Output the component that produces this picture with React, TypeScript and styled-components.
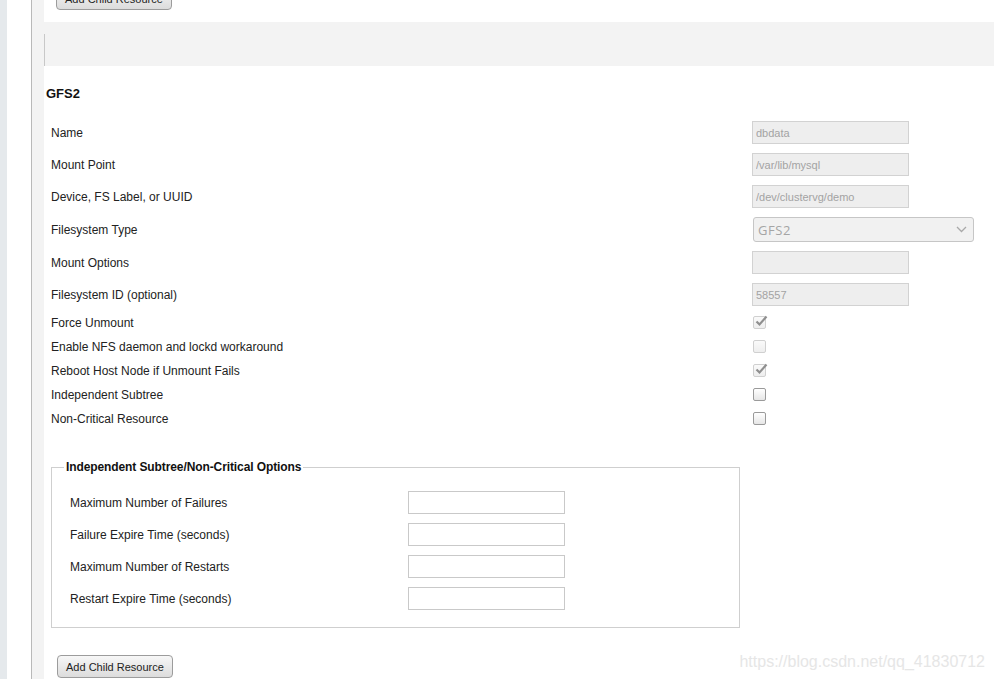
import React from "react";
import styled, { createGlobalStyle } from "styled-components";

const Global = createGlobalStyle`
  html, body { margin: 0; padding: 0; background: #fff; }
  body { font-family: "Liberation Sans", Arial, sans-serif; color: #222; overflow: hidden; }
`;

const Page = styled.div`
  display: flex;
  height: 679px;
  overflow: hidden;
  position: relative;
`;

const LeftStrip = styled.div`
  width: 7px;
  background: #e5e9ec;
  flex: none;
`;

const Gutter = styled.div`
  width: 24px;
  background: #fff;
  border-right: 1px solid #b9b9b9;
  flex: none;
`;

const GrayColumn = styled.div`
  width: 12px;
  background: #f3f3f3;
  flex: none;
`;

const Content = styled.div`
  flex: 1;
  display: flex;
  flex-direction: column;
  background: #fff;
`;

const TopArea = styled.div`
  height: 22px;
  display: flex;
  align-items: flex-end;
  padding: 0 0 12px 12px;
  box-sizing: border-box;
  overflow: hidden;
`;

const Band = styled.div`
  height: 44px;
  background: #f3f3f3;
  display: flex;
  align-items: flex-end;
`;

const BandMarker = styled.div`
  height: 32px;
  border-left: 1px solid #c8c8c8;
`;

const Heading = styled.h3`
  margin: 20px 0 14px 2px;
  font-size: 13px;
  line-height: 16px;
  font-weight: bold;
  color: #111;
`;

const Table = styled.div<{ $labelWidth: number }>`
  display: grid;
  grid-template-columns: ${(p) => p.$labelWidth}px 1fr;
  align-items: center;
`;

const MainTable = styled(Table)`
  margin-left: 7px;
`;

const Label = styled.div<{ $h: number }>`
  height: ${(p) => p.$h}px;
  box-sizing: border-box;
  padding-top: 2px;
  display: flex;
  align-items: center;
  font-size: 12px;
  color: #222;
`;

const Cell = styled.div<{ $h: number }>`
  height: ${(p) => p.$h}px;
  display: flex;
  align-items: center;
`;

const TextInput = styled.input<{ $disabled?: boolean }>`
  width: 157px;
  height: 23px;
  box-sizing: border-box;
  border: 1px solid ${(p) => (p.$disabled ? "#d2d2d2" : "#c9c9c9")};
  background: ${(p) => (p.$disabled ? "#eeeeee" : "#ffffff")};
  color: #a3a3a3;
  font-family: "Liberation Sans", Arial, sans-serif;
  font-size: 11px;
  padding: 1px 3px 0;
  margin: 0;
  outline: none;
`;

const SelectBox = styled.div`
  width: 221px;
  height: 25px;
  box-sizing: border-box;
  margin-left: 1px;
  border: 1px solid #c6c6c6;
  border-radius: 3px;
  background: #f1f1f1;
  display: flex;
  align-items: center;
  justify-content: space-between;
  padding: 1px 6px 0 4px;
  font-family: "Open Sans", "DejaVu Sans", sans-serif;
  font-size: 13px;
  letter-spacing: 0.6px;
  color: #a5a5a5;
`;

const Check = styled.span<{ $disabled?: boolean }>`
  width: 13px;
  height: 13px;
  box-sizing: border-box;
  margin-left: 1px;
  border: 1px solid ${(p) => (p.$disabled ? "#d0d0d0" : "#9a9a9a")};
  border-radius: 2px;
  background: ${(p) =>
    p.$disabled
      ? "linear-gradient(#fafafa, #eeeeee)"
      : "linear-gradient(#ffffff, #e6e6e6)"};
  display: inline-flex;
  align-items: center;
  justify-content: center;
  position: relative;
`;

const Tick = styled.svg`
  position: absolute;
  left: 1px;
  top: -2px;
`;

const Fieldset = styled.fieldset`
  margin: 30px 0 0 7px;
  width: 689px;
  box-sizing: border-box;
  padding: 0 12px 13px 12px;
  border: 1px solid #cfcfcf;
`;

const Legend = styled.legend`
  padding: 0 2px;
  font-size: 12px;
  line-height: 14px;
  font-weight: bold;
  letter-spacing: -0.1px;
  color: #111;
`;

const FieldsetTable = styled(Table)`
  padding: 12px 0 0 6px;
`;

const ButtonRow = styled.div<{ $top: number }>`
  margin-top: ${(p) => p.$top}px;
  padding-left: 13px;
`;

const Button = styled.button`
  height: 23px;
  box-sizing: border-box;
  padding: 0 8px;
  border: 1px solid #9c9c9c;
  border-radius: 4px;
  background: linear-gradient(#f7f7f7, #dcdcdc);
  font-family: "Liberation Sans", Arial, sans-serif;
  font-size: 11px;
  color: #222;
  white-space: nowrap;
  flex: none;
`;

const Watermark = styled.div`
  position: absolute;
  right: 9px;
  bottom: 8px;
  font-family: "Liberation Sans", Arial, sans-serif;
  font-size: 16px;
  color: #e6e6e6;
`;

const Chevron = () => (
  <svg width="11" height="7" viewBox="0 0 11 7">
    <path d="M1 1 L5.5 5.5 L10 1" fill="none" stroke="#a9a9a9" strokeWidth="1.3" />
  </svg>
);

const CheckMark = () => (
  <Tick width="13" height="12" viewBox="0 0 13 12">
    <path d="M1.5 6.5 L4.5 9.5 L11.5 1.5" fill="none" stroke="#8f8f8f" strokeWidth="2.2" />
  </Tick>
);

type Row =
  | { label: string; kind: "text"; value: string; h: number }
  | { label: string; kind: "select"; value: string; h: number }
  | { label: string; kind: "check"; checked: boolean; disabled: boolean; h: number };

const rows: Row[] = [
  { label: "Name", kind: "text", value: "dbdata", h: 32 },
  { label: "Mount Point", kind: "text", value: "/var/lib/mysql", h: 32 },
  { label: "Device, FS Label, or UUID", kind: "text", value: "/dev/clustervg/demo", h: 32 },
  { label: "Filesystem Type", kind: "select", value: "GFS2", h: 34 },
  { label: "Mount Options", kind: "text", value: "", h: 32 },
  { label: "Filesystem ID (optional)", kind: "text", value: "58557", h: 32 },
  { label: "Force Unmount", kind: "check", checked: true, disabled: true, h: 24 },
  { label: "Enable NFS daemon and lockd workaround", kind: "check", checked: false, disabled: true, h: 24 },
  { label: "Reboot Host Node if Unmount Fails", kind: "check", checked: true, disabled: true, h: 24 },
  { label: "Independent Subtree", kind: "check", checked: false, disabled: false, h: 24 },
  { label: "Non-Critical Resource", kind: "check", checked: false, disabled: false, h: 24 },
];

const subRows = [
  "Maximum Number of Failures",
  "Failure Expire Time (seconds)",
  "Maximum Number of Restarts",
  "Restart Expire Time (seconds)",
];

export default function App() {
  return (
    <>
      <Global />
      <Page>
        <LeftStrip />
        <Gutter />
        <GrayColumn />
        <Content>
          <TopArea>
            <Button>Add Child Resource</Button>
          </TopArea>
          <Band>
            <BandMarker />
          </Band>
          <Heading>GFS2</Heading>
          <MainTable $labelWidth={701}>
            {rows.map((r) => (
              <React.Fragment key={r.label}>
                <Label $h={r.h}>{r.label}</Label>
                <Cell $h={r.h}>
                  {r.kind === "text" && <TextInput $disabled readOnly value={r.value} />}
                  {r.kind === "select" && (
                    <SelectBox>
                      <span>{r.value}</span>
                      <Chevron />
                    </SelectBox>
                  )}
                  {r.kind === "check" && (
                    <Check $disabled={r.disabled}>{r.checked && <CheckMark />}</Check>
                  )}
                </Cell>
              </React.Fragment>
            ))}
          </MainTable>
          <Fieldset>
            <Legend>Independent Subtree/Non-Critical Options</Legend>
            <FieldsetTable $labelWidth={338}>
              {subRows.map((l) => (
                <React.Fragment key={l}>
                  <Label $h={32}>{l}</Label>
                  <Cell $h={32}>
                    <TextInput readOnly value="" />
                  </Cell>
                </React.Fragment>
              ))}
            </FieldsetTable>
          </Fieldset>
          <ButtonRow $top={27}>
            <Button>Add Child Resource</Button>
          </ButtonRow>
        </Content>
        <Watermark>https://blog.csdn.net/qq_41830712</Watermark>
      </Page>
    </>
  );
}
